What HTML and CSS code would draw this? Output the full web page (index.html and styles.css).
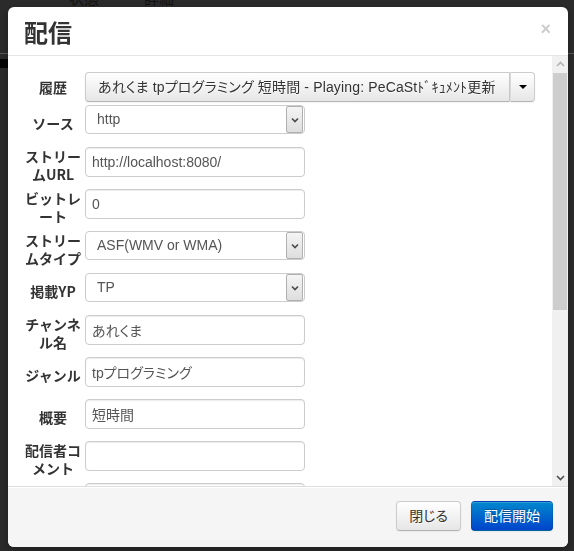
FILE: index.html
```html
<!DOCTYPE html>
<html lang="ja">
<head>
<meta charset="utf-8">
<title>配信</title>
<link rel="stylesheet" href="styles.css">
</head>
<body>
<div class="page">
  <div class="tabs"><span>状態</span><span>詳細</span></div>
  <div class="page-rule"></div>
  <div class="page-block"></div>
</div>
<div class="modal">
  <div class="modal-header">
    <h3 class="title">配信</h3>
    <span class="close">×</span>
  </div>
  <div class="modal-main">
    <div class="modal-body">
      <div class="row row-history">
        <div class="label label-short">履歴</div>
        <div class="btn-group">
          <div class="btn btn-main">あれくま tpプログラミング 短時間 - Playing: PeCaStﾄﾞｷｭﾒﾝﾄ更新</div>
          <div class="btn btn-caret"><span class="caret"></span></div>
        </div>
      </div>
      <div class="row">
        <div class="label">ソース</div>
        <div class="select"><span class="select-text">http</span><span class="select-arrow"><svg width="8" height="6" viewBox="0 0 8 6"><polyline points="1,1.5 4,4.5 7,1.5" fill="none" stroke="#4a4a4a" stroke-width="1.6"/></svg></span></div>
      </div>
      <div class="row">
        <div class="label">ストリームURL</div>
        <div class="input">http://localhost:8080/</div>
      </div>
      <div class="row">
        <div class="label">ビットレート</div>
        <div class="input">0</div>
      </div>
      <div class="row">
        <div class="label">ストリームタイプ</div>
        <div class="select"><span class="select-text">ASF(WMV or WMA)</span><span class="select-arrow"><svg width="8" height="6" viewBox="0 0 8 6"><polyline points="1,1.5 4,4.5 7,1.5" fill="none" stroke="#4a4a4a" stroke-width="1.6"/></svg></span></div>
      </div>
      <div class="row">
        <div class="label">掲載YP</div>
        <div class="select"><span class="select-text">TP</span><span class="select-arrow"><svg width="8" height="6" viewBox="0 0 8 6"><polyline points="1,1.5 4,4.5 7,1.5" fill="none" stroke="#4a4a4a" stroke-width="1.6"/></svg></span></div>
      </div>
      <div class="row">
        <div class="label">チャンネル名</div>
        <div class="input">あれくま</div>
      </div>
      <div class="row">
        <div class="label">ジャンル</div>
        <div class="input">tpプログラミング</div>
      </div>
      <div class="row">
        <div class="label">概要</div>
        <div class="input">短時間</div>
      </div>
      <div class="row">
        <div class="label">配信者コメント</div>
        <div class="input"></div>
      </div>
      <div class="row">
        <div class="label">コンタクトURL</div>
        <div class="input"></div>
      </div>
      <div class="row">
        <div class="label">トラック</div>
        <div class="input"></div>
      </div>
    </div>
    <div class="scrollbar">
      <div class="sb-btn"><svg width="9" height="6" viewBox="0 0 9 6"><polyline points="1,5 4.5,1.5 8,5" fill="none" stroke="#b4b4b4" stroke-width="1.6"/></svg></div>
      <div class="sb-track"><div class="sb-thumb"></div></div>
      <div class="sb-btn"><svg width="9" height="6" viewBox="0 0 9 6"><polyline points="1,1 4.5,4.5 8,1" fill="none" stroke="#505050" stroke-width="1.6"/></svg></div>
    </div>
  </div>
  <div class="modal-footer">
    <button class="btn btn-foot">閉じる</button>
    <button class="btn btn-foot btn-primary">配信開始</button>
  </div>
</div>
</body>
</html>
```

FILE: styles.css
```css
html, body {
  margin: 0;
  padding: 0;
}
body {
  background: #2b2b2b;
  width: 574px;
  height: 551px;
  overflow: hidden;
  font-family: "Liberation Sans", "Noto Sans CJK JP", sans-serif;
  font-size: 14px;
  color: #333;
}
.page {
  height: 551px;
}
.tabs {
  display: flex;
  gap: 45px;
  padding-left: 69px;
  margin-top: -12px;
  font-family: "Noto Sans CJK JP", sans-serif;
  font-size: 15px;
  line-height: 20px;
  color: #121212;
}
.page-rule {
  margin-top: 45px;
  height: 1px;
  background: #5a5a5a;
}
.page-block {
  margin-top: 5px;
  width: 40px;
  height: 9px;
  background: #050505;
}
.modal {
  position: fixed;
  left: 8px;
  top: 7px;
  width: 560px;
  height: 540px;
  background: #fff;
  border-radius: 6px;
  box-shadow: 0 3px 7px rgba(0, 0, 0, 0.3);
  display: flex;
  flex-direction: column;
  overflow: hidden;
}
.modal-header {
  height: 48px;
  flex: none;
  border-bottom: 1px solid #e5e5e5;
  display: flex;
  justify-content: space-between;
  align-items: flex-start;
  padding: 0 16px;
}
.title {
  margin: 0;
  margin-top: 10px;
  font-family: "Noto Sans CJK JP", sans-serif;
  font-size: 24px;
  line-height: 30px;
  font-weight: bold;
  color: #333;
}
.close {
  margin-top: 12px;
  margin-right: 1px;
  font-family: "Liberation Sans", sans-serif;
  font-size: 18px;
  line-height: 20px;
  font-weight: bold;
  color: #000;
  opacity: 0.2;
}
.modal-main {
  height: 430px;
  flex: none;
  display: flex;
}
.modal-body {
  flex: 1;
  overflow: hidden;
  padding: 16px 0 0 16px;
}
.row {
  display: flex;
  align-items: flex-start;
  margin-bottom: 6px;
}
.row-history {
  align-items: center;
  margin-bottom: 3px;
}
.label {
  width: 58px;
  min-height: 36px;
  margin-right: 3px;
  flex: none;
  display: flex;
  align-items: center;
  justify-content: center;
  text-align: center;
  font-family: "Noto Sans CJK JP", sans-serif;
  font-weight: bold;
  font-size: 14px;
  line-height: 18px;
  color: #333;
}
.label-short {
  min-height: 30px;
}
.input, .select {
  box-sizing: border-box;
  width: 220px;
  height: 30px;
  border: 1px solid #ccc;
  border-radius: 4px;
  box-shadow: inset 0 1px 1px rgba(0, 0, 0, 0.075);
  padding: 0 6px;
  display: flex;
  align-items: center;
  color: #555;
  font-size: 14px;
  font-feature-settings: "palt";
  white-space: nowrap;
}
.select {
  height: 29px;
  padding: 0 1px 0 11px;
  box-shadow: none;
  justify-content: space-between;
}
.select-text {
  margin-top: -2px;
}
.select-arrow {
  box-sizing: border-box;
  width: 17px;
  height: 27px;
  border: 1px solid #b0b0b0;
  border-radius: 2px;
  background: linear-gradient(to bottom, #f4f4f4, #dedede);
  display: flex;
  align-items: center;
  justify-content: center;
}
.btn-group {
  display: flex;
  width: 450px;
  height: 30px;
}
.btn {
  box-sizing: border-box;
  font-family: "Liberation Sans", "Noto Sans CJK JP", sans-serif;
  font-size: 14px;
  line-height: 20px;
  color: #333;
  text-shadow: 0 1px 1px rgba(255, 255, 255, 0.75);
  background: linear-gradient(to bottom, #ffffff, #e6e6e6);
  border: 1px solid #ccc;
  border-bottom-color: #b3b3b3;
  box-shadow: inset 0 1px 0 rgba(255, 255, 255, 0.2), 0 1px 2px rgba(0, 0, 0, 0.05);
  font-feature-settings: "palt";
}
.btn-main {
  width: 425px;
  height: 30px;
  padding: 4px 12px;
  border-radius: 4px 0 0 4px;
  white-space: nowrap;
  overflow: hidden;
  letter-spacing: 0.15px;
}
.btn-caret {
  width: 25px;
  height: 30px;
  border-radius: 0 4px 4px 0;
  display: flex;
  align-items: center;
  justify-content: center;
  box-shadow: inset 1px 0 0 rgba(255, 255, 255, 0.125), inset 0 1px 0 rgba(255, 255, 255, 0.2), 0 1px 2px rgba(0, 0, 0, 0.05);
  border-left: 1px solid #d9d9d9;
}
.caret {
  width: 0;
  height: 0;
  border-top: 4px solid #000;
  border-left: 4px solid transparent;
  border-right: 4px solid transparent;
  margin-left: 1px;
}
.scrollbar {
  width: 16px;
  flex: none;
  display: flex;
  flex-direction: column;
  background: #f0f0f0;
}
.sb-btn {
  height: 16px;
  flex: none;
  display: flex;
  align-items: center;
  justify-content: center;
}
.sb-track {
  flex: 1;
  display: flex;
  flex-direction: column;
}
.sb-thumb {
  margin: 1px 1px 0;
  height: 237px;
  background: #cdcdcd;
}
.modal-footer {
  flex: 1;
  background: #f5f5f5;
  border-top: 1px solid #ddd;
  box-shadow: inset 0 1px 0 #fff;
  display: flex;
  justify-content: flex-end;
  align-items: flex-start;
  gap: 10px;
  padding: 14px 15px 0;
}
.btn-foot {
  height: 30px;
  padding: 4px 12px;
  border-radius: 4px;
  margin: 0;
}
.btn-primary {
  color: #fff;
  text-shadow: 0 -1px 0 rgba(0, 0, 0, 0.25);
  background: linear-gradient(to bottom, #0088cc, #0044cc);
  border-color: rgba(0, 0, 0, 0.1) rgba(0, 0, 0, 0.1) rgba(0, 0, 0, 0.25);
  font-feature-settings: normal;
}
```
